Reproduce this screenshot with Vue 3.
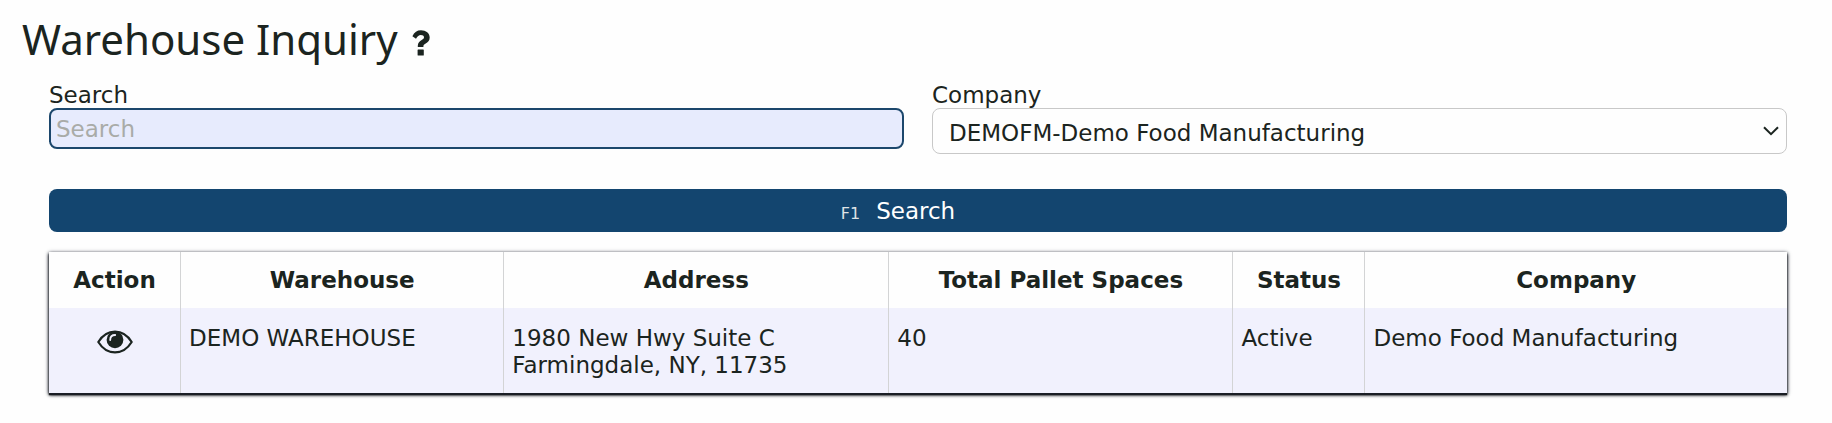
<script setup>
import { ref } from 'vue'

const search = ref('')
const company = ref('DEMOFM')
const companies = [{ code: 'DEMOFM', name: 'Demo Food Manufacturing' }]

const columns = [
  { label: 'Action', cls: 'c-action' },
  { label: 'Warehouse', cls: 'c-warehouse' },
  { label: 'Address', cls: 'c-address' },
  { label: 'Total Pallet Spaces', cls: 'c-pallets' },
  { label: 'Status', cls: 'c-status' },
  { label: 'Company', cls: 'c-company' },
]

const rows = [
  {
    warehouse: 'DEMO WAREHOUSE',
    street: '1980 New Hwy Suite C',
    city: 'Farmingdale, NY, 11735',
    pallets: 40,
    status: 'Active',
    company: 'Demo Food Manufacturing',
  },
]
</script>

<template>
  <main class="page">
    <header class="title">
      <h1>Warehouse Inquiry</h1>
      <button type="button" class="icon-btn" aria-label="Help">
        <svg class="help" viewBox="0 0 18 26" aria-hidden="true">
          <path d="M0.4 6.2C2.4 2.2 5 0.3 9 0.3C14 0.3 17.7 3.4 17.7 7.4C17.7 10.8 15.7 12.3 13.7 13.5C12 14.5 11.4 15 11.4 16.4V17H5.8V15.8C5.8 12.6 7.7 11 9.7 9.9C11.3 9 12 8.5 12 7.3C12 5.9 10.6 5 8.8 5C6.7 5 5.7 6.2 4 8.7Z" fill="currentColor" />
          <rect x="5.6" y="19.4" width="6.2" height="6.2" rx="0.6" fill="currentColor" />
        </svg>
      </button>
    </header>

    <form class="content" @submit.prevent>
      <div class="fields">
        <div class="field">
          <label for="search">Search</label>
          <input id="search" v-model="search" type="text" placeholder="Search" />
        </div>
        <div class="field">
          <label for="company">Company</label>
          <div class="select-wrap">
            <select id="company" v-model="company">
              <option v-for="c in companies" :key="c.code" :value="c.code">{{ c.code }}-{{ c.name }}</option>
            </select>
            <svg class="chevron" viewBox="0 0 16 10" aria-hidden="true">
              <path d="M1 1.2l7 7 7-7" fill="none" stroke="currentColor" stroke-width="2" />
            </svg>
          </div>
        </div>
      </div>

      <button type="submit" class="submit"><small>F1</small><span>Search</span></button>

      <table>
        <thead>
          <tr>
            <th v-for="col in columns" :key="col.label" :class="col.cls" scope="col">{{ col.label }}</th>
          </tr>
        </thead>
        <tbody>
          <tr v-for="row in rows" :key="row.warehouse">
            <td class="action">
              <button type="button" class="icon-btn" aria-label="View warehouse">
                <svg class="eye" viewBox="0 0 36 24" aria-hidden="true">
                  <path d="M1.3 12C5.5 5.2 11.3 1.6 18 1.6S30.5 5.2 34.7 12C30.5 18.8 24.7 22.4 18 22.4S5.5 18.8 1.3 12z" fill="none" stroke="currentColor" stroke-width="2.2" stroke-linejoin="round" />
                  <circle cx="18" cy="9.8" r="8.4" fill="currentColor" />
                  <path d="M13.2 10c0-3.2 1.8-5 5-5" fill="none" stroke="#f1f1fd" stroke-width="1.8" stroke-linecap="round" />
                </svg>
              </button>
            </td>
            <td>{{ row.warehouse }}</td>
            <td>{{ row.street }}<br />{{ row.city }}</td>
            <td>{{ row.pallets }}</td>
            <td>{{ row.status }}</td>
            <td>{{ row.company }}</td>
          </tr>
        </tbody>
      </table>
    </form>
  </main>
</template>

<style>
body {
  margin: 0;
  background: #fefefe;
}
</style>

<style scoped>
.page {
  padding: 7px 45px 24px 22px;
  color: #1b2420;
  font: 23px/27px Verdana, 'DejaVu Sans', sans-serif;
}
.title {
  display: flex;
  align-items: center;
  gap: 14px;
}
h1 {
  margin: 0;
  font: 400 42px/64px 'Segoe UI', 'Noto Sans', 'Open Sans', sans-serif;
}
.icon-btn {
  display: inline-flex;
  padding: 0;
  border: 0;
  background: none;
  color: inherit;
}
.title .icon-btn {
  padding-top: 8px;
}
.help {
  width: 18px;
  height: 26px;
}
.content {
  padding: 12px 0 0 27px;
}
.fields {
  display: grid;
  grid-template-columns: 1fr 1fr;
  gap: 28px;
}
.field label {
  display: block;
  line-height: 25px;
}
input,
select {
  display: block;
  box-sizing: border-box;
  width: 100%;
  margin: 0;
  border-radius: 8px;
  color: inherit;
  font: inherit;
}
input {
  height: 41px;
  padding: 0 5px;
  border: 2px solid #1c476c;
  background: #e7ebfd;
  outline: none;
}
input::placeholder {
  color: #a9aba8;
  opacity: 1;
}
.select-wrap {
  display: grid;
  align-items: center;
}
.select-wrap > * {
  grid-area: 1 / 1;
}
select {
  height: 46px;
  padding: 4px 40px 0 16px;
  border: 1px solid #c8c8c8;
  background: #fefefe;
  appearance: none;
}
.chevron {
  justify-self: end;
  width: 16px;
  height: 10px;
  margin-right: 8px;
  pointer-events: none;
}
.submit {
  display: flex;
  align-items: center;
  justify-content: center;
  gap: 16px;
  width: 100%;
  height: 43px;
  margin: 35px 0 20px;
  padding: 2px 40px 0 0;
  border: 0;
  border-radius: 8px;
  background: #13456f;
  color: #fff;
  font: inherit;
}
.submit small {
  padding-top: 4px;
  color: #dfe3e6;
  font-size: 16px;
}
table {
  width: 100%;
  table-layout: fixed;
  border-collapse: separate;
  border-spacing: 0;
  background: #fefefe;
  box-shadow: 0 1px 4px #1b2030, 0 2px 3px #1b1d1c, 0 2px 1px #1b1d1c;
}
th,
td {
  box-sizing: border-box;
  border-right: 1px solid #d3d4d5;
}
th:last-child,
td:last-child {
  border-right: 0;
}
th {
  padding: 15px 8px 14px;
  text-align: center;
  font-weight: 700;
}
td {
  padding: 17px 8px 14px;
  background: #f1f1fd;
  vertical-align: top;
  text-align: left;
}
.action {
  padding-top: 22px;
  text-align: center;
}
.eye {
  width: 36px;
  height: 24px;
}
.c-action { width: 7.6%; }
.c-warehouse { width: 18.6%; }
.c-address { width: 22.15%; }
.c-pallets { width: 19.8%; }
.c-status { width: 7.6%; }
</style>
